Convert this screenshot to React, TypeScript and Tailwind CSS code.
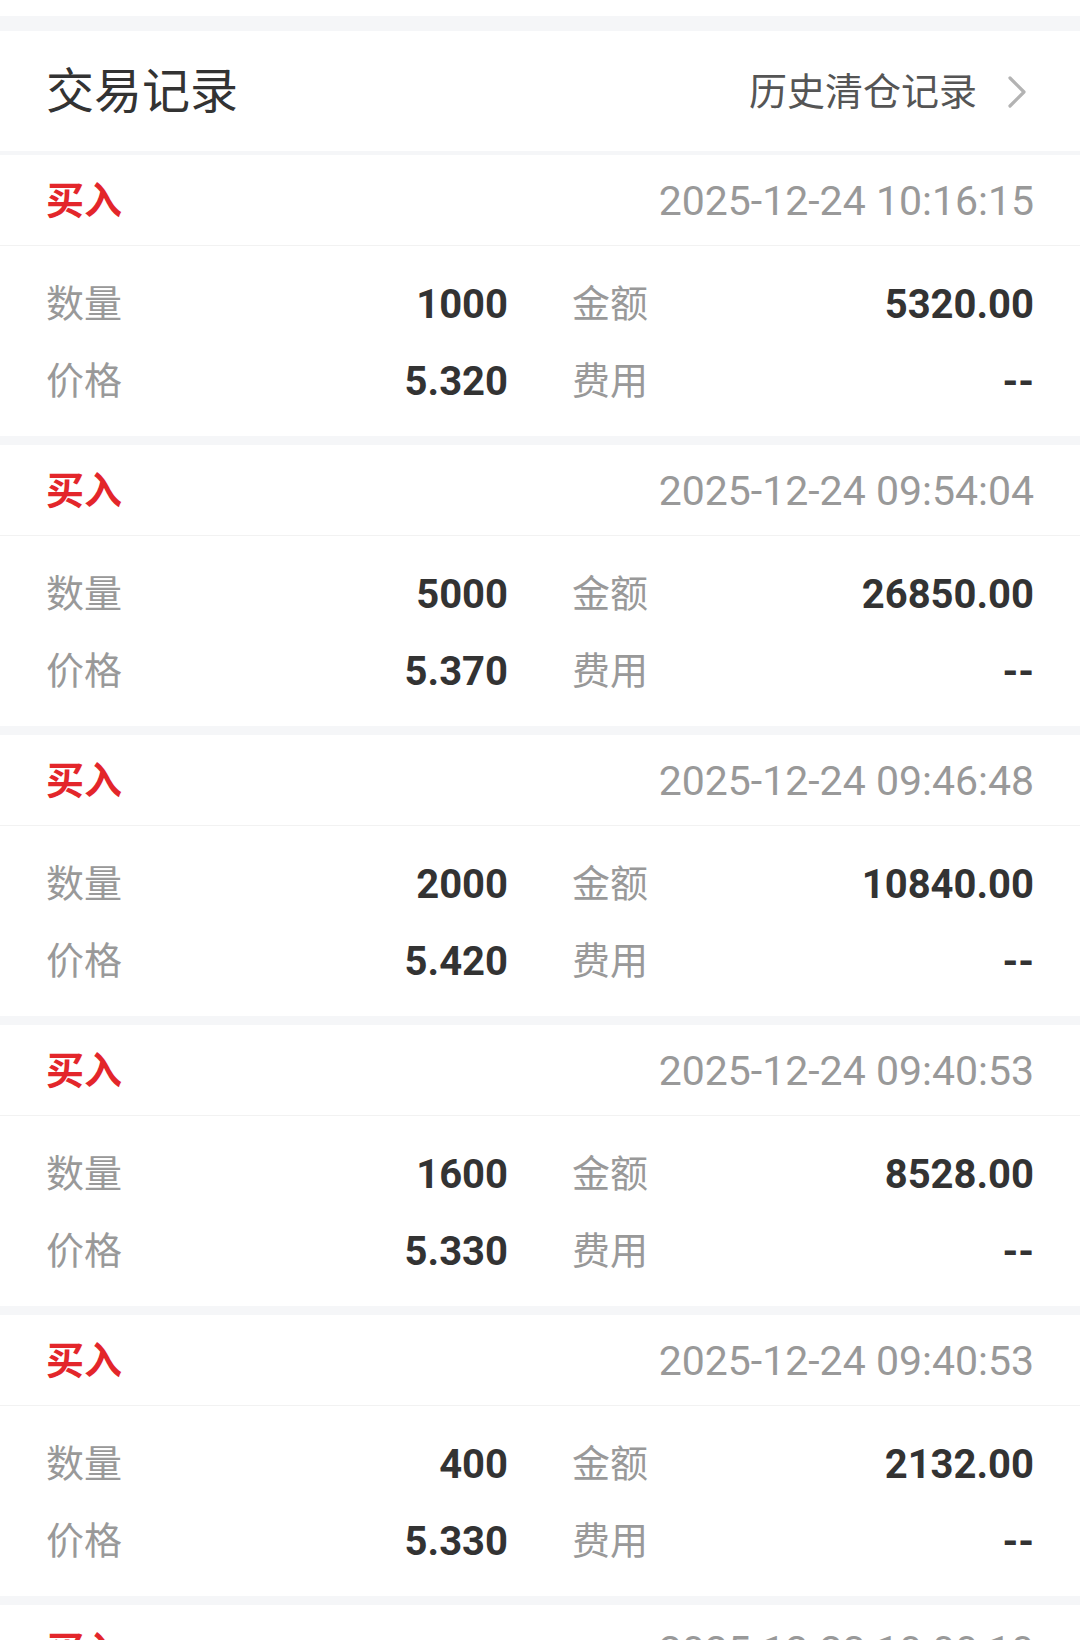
interface Trade {
  side: string
  time: string
  qty: string
  price: string
  amount: string
  fee: string
}

const trades: Trade[] = [
  { side: '买入', time: '2025-12-24 10:16:15', qty: '1000', price: '5.320', amount: '5320.00', fee: '--' },
  { side: '买入', time: '2025-12-24 09:54:04', qty: '5000', price: '5.370', amount: '26850.00', fee: '--' },
  { side: '买入', time: '2025-12-24 09:46:48', qty: '2000', price: '5.420', amount: '10840.00', fee: '--' },
  { side: '买入', time: '2025-12-24 09:40:53', qty: '1600', price: '5.330', amount: '8528.00', fee: '--' },
  { side: '买入', time: '2025-12-24 09:40:53', qty: '400', price: '5.330', amount: '2132.00', fee: '--' },
  { side: '买入', time: '2025-12-23 10:00:10', qty: '1000', price: '5.300', amount: '5300.00', fee: '--' },
]

function Cell({ label, value }: { label: string; value: string }) {
  return (
    <div className="flex items-center justify-between h-[77px]">
      <span className="text-[38px] text-[#999999]">{label}</span>
      <span className="text-[40px] font-bold text-[#333333]">{value}</span>
    </div>
  )
}

function TradeCard({ t }: { t: Trade }) {
  return (
    <div className="bg-white">
      <div className="h-[91px] pt-[3px] flex items-center justify-between px-[46px] border-b border-[#f2f2f2]">
        <span className="text-[38px] font-bold text-[#e3262b]">{t.side}</span>
        <span className="text-[41px] text-[#999999]">{t.time}</span>
      </div>
      <div className="h-[190px] pt-[20px] px-[46px] grid grid-cols-2 gap-x-[64px] content-start">
        <Cell label="数量" value={t.qty} />
        <Cell label="金额" value={t.amount} />
        <Cell label="价格" value={t.price} />
        <Cell label="费用" value={t.fee} />
      </div>
    </div>
  )
}

export default function App() {
  return (
    <div
      className="w-[1080px] h-[1640px] overflow-hidden bg-white"
      style={{ fontFamily: 'Roboto, "Noto Sans CJK SC", sans-serif' }}
    >
      <div className="h-[16px] bg-white" />
      <div className="h-[15px] bg-[#f5f6f8]" />
      <div className="h-[124px] pt-[2px] flex items-center justify-between pl-[46px] pr-[53px] border-b-[4px] border-[#f5f6f8]">
        <span className="text-[48px] text-[#333333]">交易记录</span>
        <div className="flex items-center gap-[30px]">
          <span className="text-[38px] text-[#555555]">历史清仓记录</span>
          <svg width="20" height="32" viewBox="0 0 20 32" fill="none" stroke="#b3b3b3" strokeWidth="3.2" strokeLinecap="round" strokeLinejoin="round">
            <path d="M3 2 L17 16 L3 30" />
          </svg>
        </div>
      </div>
      <div className="flex flex-col gap-[9px] bg-[#f5f6f8]">
        {trades.map((t, i) => (
          <TradeCard key={i} t={t} />
        ))}
      </div>
    </div>
  )
}
